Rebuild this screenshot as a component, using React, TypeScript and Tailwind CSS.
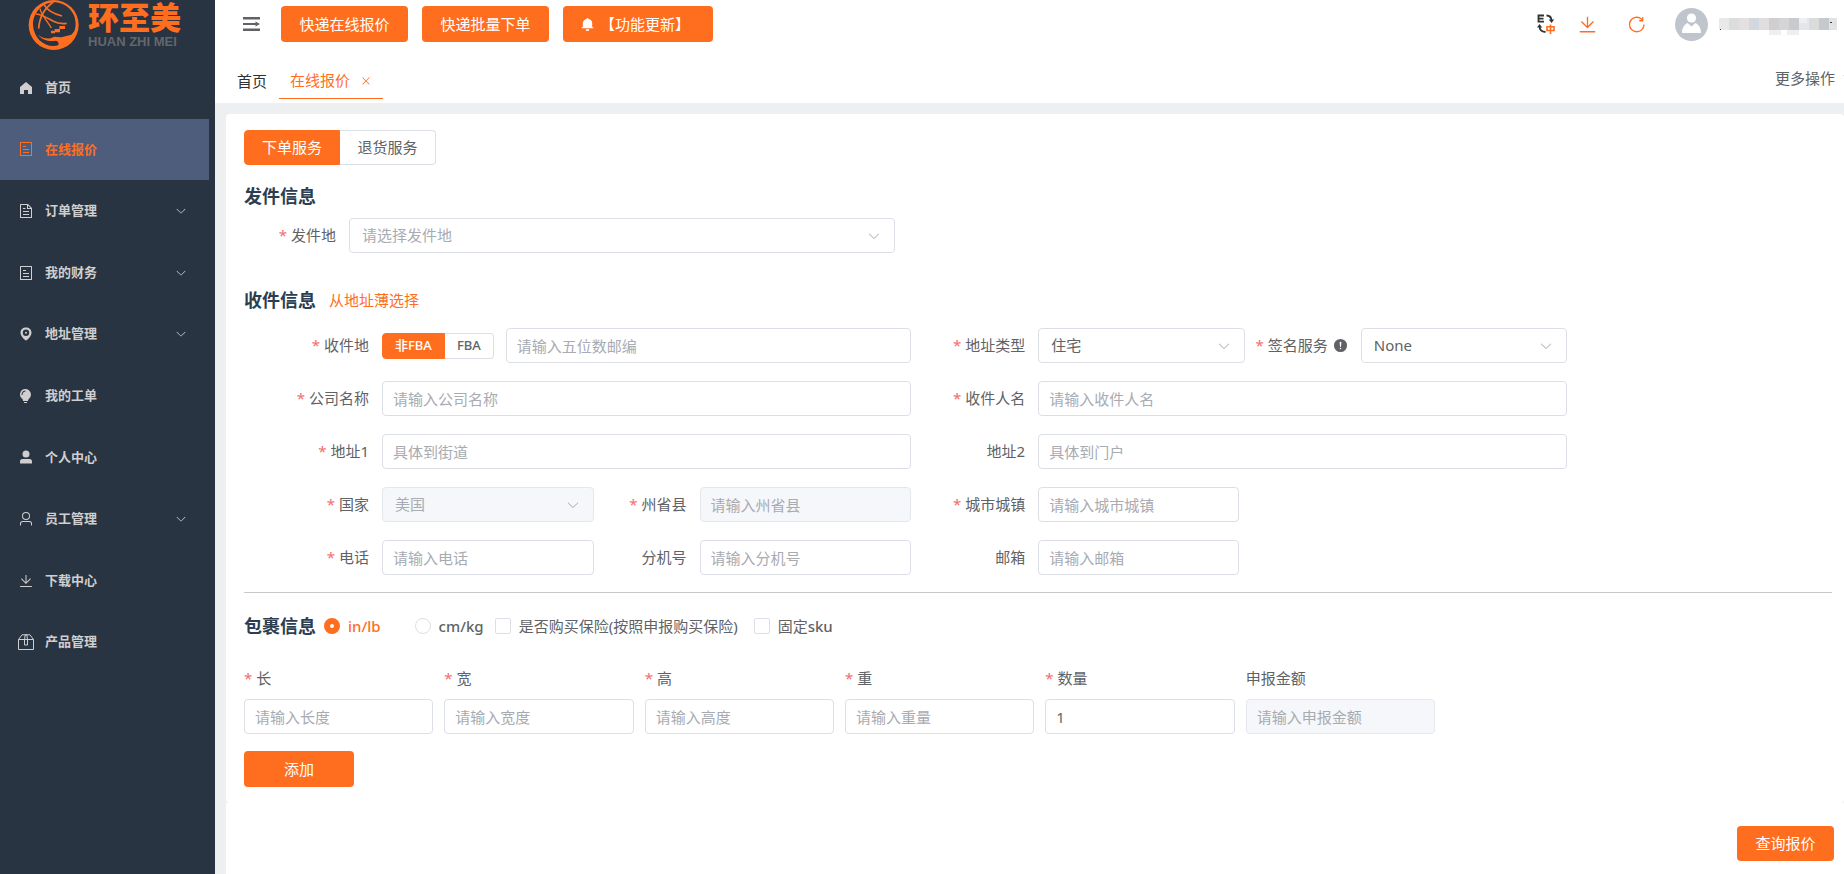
import React, { useState } from 'react';

const ICONS = {
  home: 'M512 128 128 447.936V896h255.936V640H640v256h255.936V447.936z',
  tickets:
    'M192 128v768h640V128zm-32-64h704a32 32 0 0 1 32 32v832a32 32 0 0 1-32 32H160a32 32 0 0 1-32-32V96a32 32 0 0 1 32-32m160 448h384v64H320zm0-192h192v64H320zm0 384h384v64H320z',
  document:
    'M832 384H576V128H192v768h640zm-26.496-64L640 154.496V320zM160 64h480l256 256v608a32 32 0 0 1-32 32H160a32 32 0 0 1-32-32V96a32 32 0 0 1 32-32m160 448h384v64H320zm0-192h160v64H320zm0 384h384v64H320z',
  location:
    'M512 928c23.936 0 117.504-68.352 192.064-153.152C803.456 661.888 864 535.808 864 416c0-189.632-155.84-320-352-320S160 226.368 160 416c0 120.32 60.544 246.4 159.936 359.232C394.432 859.84 488 928 512 928m0-435.2a64 64 0 1 0 0-128 64 64 0 0 0 0 128m0 140.8a204.8 204.8 0 1 1 0-409.6 204.8 204.8 0 0 1 0 409.6',
  bulb:
    'M384 960v-64h192.064v64zm448-544a350.656 350.656 0 0 1-128.32 271.424C665.344 719.04 640 763.776 640 813.504V832H320v-14.336c0-48-19.392-95.36-57.216-124.992a351.552 351.552 0 0 1-128.448-344.256c25.344-136.448 133.888-248.128 269.76-276.48A352.384 352.384 0 0 1 832 416m-544 32c0-132.288 75.904-224 192-224v-64c-154.432 0-256 122.752-256 288z',
  userFilled:
    'M288 320a224 224 0 1 0 448 0 224 224 0 1 0-448 0m544 608H160a32 32 0 0 1-32-32v-96a160 160 0 0 1 160-160h448a160 160 0 0 1 160 160v96a32 32 0 0 1-32 32z',
  user:
    'M512 512a192 192 0 1 0 0-384 192 192 0 0 0 0 384m0 64a256 256 0 1 1 0-512 256 256 0 0 1 0 512m320 320v-96a96 96 0 0 0-96-96H288a96 96 0 0 0-96 96v96a32 32 0 1 1-64 0v-96a160 160 0 0 1 160-160h448a160 160 0 0 1 160 160v96a32 32 0 1 1-64 0',
  download:
    'M160 832h704a32 32 0 1 1 0 64H160a32 32 0 1 1 0-64m384-253.696 236.288-236.352 45.248 45.248L508.8 704 192 387.2l45.248-45.248L480 584.704V128h64z',
  box:
    'M317.056 128 128 344.064V896h768V344.064L706.944 128zm-14.528-64h418.944a32 32 0 0 1 24.064 10.88l206.528 236.096A32 32 0 0 1 960 332.032V928a32 32 0 0 1-32 32H96a32 32 0 0 1-32-32V332.032a32 32 0 0 1 7.936-21.12L278.4 75.008A32 32 0 0 1 302.528 64z',
  arrowDown:
    'M831.872 340.864 512 652.672 192.128 340.864a30.592 30.592 0 0 0-42.752 0 29.12 29.12 0 0 0 0 41.6L489.664 714.24a32 32 0 0 0 44.672 0l340.288-331.712a29.12 29.12 0 0 0 0-41.728 30.592 30.592 0 0 0-42.752 0z',
  refresh:
    'M784.512 230.272v-50.56a32 32 0 1 1 64 0v149.056a32 32 0 0 1-32 32H667.52a32 32 0 1 1 0-64h92.992A320 320 0 1 0 524.8 833.152a320 320 0 0 0 320-320h64a384 384 0 0 1-384 384 384 384 0 0 1-384-384 384 384 0 0 1 643.712-282.88z',
  bell:
    'M640 832a128 128 0 0 1-256 0zm192-64H134.4a38.4 38.4 0 0 1 0-76.8H192V448c0-154.88 110.08-284.16 256.32-313.6a64 64 0 1 1 127.36 0A320.128 320.128 0 0 1 832 448v243.2h57.6a38.4 38.4 0 0 1 0 76.8z',
  warning:
    'M512 64a448 448 0 1 1 0 896 448 448 0 0 1 0-896m0 192a58.432 58.432 0 0 0-58.24 63.744l23.36 256.384a35.072 35.072 0 0 0 69.76 0l23.296-256.384A58.432 58.432 0 0 0 512 256m0 512a51.2 51.2 0 1 0 0-102.4 51.2 51.2 0 0 0 0 102.4',
  close:
    'M764.288 214.592 512 466.88 259.712 214.592a31.936 31.936 0 0 0-45.12 45.12L466.752 512 214.528 764.224a31.936 31.936 0 1 0 45.12 45.184L512 557.184l252.288 252.288a31.936 31.936 0 0 0 45.12-45.12L557.12 512.064l252.288-252.352a31.936 31.936 0 1 0-45.12-45.184z',
};

type IconName = keyof typeof ICONS;

const Icon = ({ name, className }: { name: IconName; className: string }) => (
  <svg viewBox="0 0 1024 1024" fill="currentColor" className={`shrink-0 ${className}`} aria-hidden="true">
    <path fillRule="evenodd" d={ICONS[name]} />
  </svg>
);

// the package icon needs strokes because its parts overlap
const BoxIcon = () => (
  <svg viewBox="0 0 16 16" fill="none" stroke="currentColor" className="w-4 h-4 shrink-0" aria-hidden="true">
    <path d="M.5 5.500 4 .8h8l3.500 4.700v10H.5zM.5 5.500h15M6.500 5.500v5.500h3V5.500L8.800.8H7.200z" />
  </svg>
);

const menu: { label: string; icon: IconName; more?: boolean }[] = [
  { label: '首页', icon: 'home' },
  { label: '在线报价', icon: 'tickets' },
  { label: '订单管理', icon: 'document', more: true },
  { label: '我的财务', icon: 'tickets', more: true },
  { label: '地址管理', icon: 'location', more: true },
  { label: '我的工单', icon: 'bulb' },
  { label: '个人中心', icon: 'userFilled' },
  { label: '员工管理', icon: 'user', more: true },
  { label: '下载中心', icon: 'download' },
  { label: '产品管理', icon: 'box' },
];

const Logo = () => (
  <div className="flex h-[57px] pl-7 gap-2">
    <svg viewBox="0 0 156 156" className="w-[52px] h-[52px] shrink-0" aria-hidden="true">
      <path
        fill="#ff6e1e"
        fillRule="evenodd"
        d="M77 0a75 75 0 1 0 0 150A75 75 0 1 0 77 0zM83 7a65 65 0 0 1 10 128C60 148 18 122 15 76 14 38 44 6 83 7z"
      />
      <g fill="none" stroke="#ff6e1e" strokeWidth="5">
        <path d="M24 42c22 2 40 16 52 22s26 8 40 6" />
        <path d="M48 14c10 18 30 28 54 34" />
        <path d="M76 6C48 26 34 50 32 86" />
        <path d="M36 26c4 20 22 36 34 58" strokeWidth="4" />
      </g>
      <path fill="#ff6e1e" d="M94 78h17v9H94zM80 87h16v10H80zM69 92h12v8H69z" />
      <path fill="#ff6e1e" d="M30 104c18 14 36 14 48 6l22 2 30-8 14-16c-4 28-26 46-54 50 4-8 2-14-6-16-20 4-42-2-54-18z" />
    </svg>
    <div className="pt-px font-['Liberation_Sans','Noto_Sans_CJK_SC',sans-serif] whitespace-nowrap">
      <div className="text-[31px] leading-9 font-black text-[#ff6e1e]">环至美</div>
      <div className="text-[13px] leading-[10px] font-bold text-[#63676c]">HUAN ZHI MEI</div>
    </div>
  </div>
);

const Sidebar = () => (
  <aside className="w-[215px] shrink-0 bg-[#283442] pr-[6px]">
    <Logo />
    <nav className="grid auto-rows-fr h-[616px]">
      {menu.map((item) => {
        const active = item.label === '在线报价';
        return (
          <a
            key={item.label}
            href="#"
            className={`flex items-center pl-[18px] pr-[22px] text-[13px] font-bold ${
              active ? 'bg-[#4e5d7c] text-[#ff6e1e]' : 'text-[#d0cece]'
            }`}
          >
            {item.icon === 'box' ? <BoxIcon /> : <Icon name={item.icon} className="w-4 h-4" />}
            <span className="flex-1 pl-[11px]">{item.label}</span>
            {item.more && <Icon name="arrowDown" className="w-3 h-3" />}
          </a>
        );
      })}
    </nav>
  </aside>
);

// masked account name
const tiles = ['#e9e9ea', '#dddcdd', '#e4e0df', '#d3d7de', '#e0dedf', '#cfcfd1', '#d5d4d6', '#c9cacd', '#e3e6ea', '#dcdbdc', '#c5c8cc', '#e2e3e5'];

const MaskedName = () => (
  <svg viewBox="0 0 118 24" className="w-[118px] h-6 shrink-0" role="img" aria-label="account">
    {tiles.map((c, i) => (
      <rect key={i} x={i * 10} y="6" width="10" height="12" fill={c} />
    ))}
    <path fill="#f0eef0" d="M50 18h12v5H50zM68 18h12v5H68zM80 6h8v5h-8z" />
    <path fill="#3a3a3a" d="M1 17h1v1H1zM111 10h2v1h-2z" />
  </svg>
);

const Header = () => (
  <header className="flex items-center justify-between h-12 pl-7 pr-[7px]">
    <div className="flex items-center">
      <button aria-label="menu" className="mr-5 text-[#606266]">
        <svg viewBox="0 0 18 16" className="block w-[18px] h-4" fill="currentColor" aria-hidden="true">
          <path d="M0 1h17v2.600H0zM0 6.900h13v2.200H0zM0 12.400h17V15H0zM12.500 5.500 17 8l-4.500 2.500z" />
        </svg>
      </button>
      <div className="flex gap-[14px] text-[15px] text-white">
        <button className="w-[127px] h-9 rounded bg-[#ff6e1e]">快递在线报价</button>
        <button className="w-[127px] h-9 rounded bg-[#ff6e1e]">快递批量下单</button>
        <button className="flex items-center w-[150px] h-9 pl-[17px] rounded bg-[#ff6e1e] whitespace-nowrap">
          <Icon name="bell" className="w-[15px] h-[15px] mr-[5px]" />
          【功能更新】
        </button>
      </div>
    </div>
    <div className="flex items-center text-[#ff6e1e]">
      <button aria-label="language" className="mr-[22px]">
        <svg viewBox="0 0 18 20" className="block w-[18px] h-5" fill="none" aria-hidden="true">
          <path stroke="#333" strokeWidth="1.800" d="M7 1.500H1.500v6.200H7M1.500 4.600h5" />
          <path stroke="#333" strokeWidth="1.800" d="M9.500 1.500c3 0 5 1.500 5 5.500M2.500 12c0 4 2 5.800 6 6" />
          <path fill="#333" d="M11.800 5.500h5.400L14.500 9zM0 13.500 2.500 10 5.200 13.500z" />
          <path stroke="#ff6e1e" strokeWidth="1.600" d="M10 12.800h7v3.700h-7zM13.500 10.500V20" />
        </svg>
      </button>
      <button aria-label="download" className="mr-7">
        <Icon name="download" className="w-[21px] h-[21px]" />
      </button>
      <button aria-label="refresh" className="mr-7">
        <Icon name="refresh" className="w-[21px] h-[21px]" />
      </button>
      <svg viewBox="0 0 33 33" className="w-[33px] h-[33px] mr-[11px]" aria-hidden="true">
        <circle cx="16.500" cy="16.500" r="16.500" fill="#c0c4cc" />
        <circle cx="16.500" cy="10" r="4.600" fill="#fff" />
        <path fill="#fff" d="M7 25c0-5 2-8 5.500-10l4 3.500 4-3.500C24 17 26 20 26 25z" />
      </svg>
      <MaskedName />
    </div>
  </header>
);

const TabBar = () => (
  <div className="flex justify-between h-[55px] pt-[15px] pb-1 pl-[22px] overflow-hidden text-[15px]">
    <div className="flex">
      <a href="#" className="flex items-center pr-3 text-[#303133]">
        首页
      </a>
      <div className="flex items-center gap-[10px] px-[11px] border-b border-[#ff6e1e] text-[#ff6e1e]">
        <a href="#">在线报价</a>
        <button aria-label="close">
          <Icon name="close" className="w-3 h-3" />
        </button>
      </div>
    </div>
    <button className="flex items-center gap-2 h-[30px] -mr-2 text-[#606266]">
      更多操作
      <svg viewBox="0 0 9 6" className="w-[9px] h-[6px]" fill="#c0c4cc" aria-hidden="true">
        <path d="M0 0h9L4.500 6z" />
      </svg>
    </button>
  </div>
);

interface LabelProps {
  id: string;
  text: string;
  required?: boolean;
  className?: string;
  children?: React.ReactNode;
}

const Label = ({ id, text, required, className = '', children }: LabelProps) => (
  <label htmlFor={id} className={`flex items-center shrink-0 whitespace-nowrap text-[#606266] ${className}`}>
    {required && <span className="mr-1 text-[#f56c6c]">*</span>}
    {text}
    {children}
  </label>
);

const TextField = (props: React.InputHTMLAttributes<HTMLInputElement>) => (
  <div className="flex-1 min-w-0">
    <input
      type="text"
      className="block w-full h-[35px] px-[10px] rounded border border-[#dcdfe6] bg-white text-[#606266] placeholder:text-[#a8abb2] outline-none focus:border-[#ff6e1e] disabled:border-[#e4e7ed] disabled:bg-[#f5f7fa]"
      {...props}
    />
  </div>
);

interface SelectFieldProps {
  id: string;
  option: string;
  muted?: boolean;
  disabled?: boolean;
}

const SelectField = ({ id, option, muted, disabled }: SelectFieldProps) => (
  <div className="relative flex-1 min-w-0">
    <select
      id={id}
      disabled={disabled}
      className={`block w-full h-[35px] pl-3 pr-8 rounded border appearance-none outline-none opacity-100 ${
        disabled ? 'border-[#e4e7ed] bg-[#f5f7fa]' : 'border-[#dcdfe6] bg-white'
      } ${muted ? 'text-[#a8abb2]' : 'text-[#606266]'}`}
    >
      <option>{option}</option>
    </select>
    <span className="absolute inset-y-0 right-[14px] flex items-center pointer-events-none text-[#a8abb2]">
      <Icon name="arrowDown" className="w-[14px] h-[14px]" />
    </span>
  </div>
);

interface SegmentedProps {
  name: string;
  options: string[];
  itemClass: string;
}

const Segmented = ({ name, options, itemClass }: SegmentedProps) => {
  const [value, setValue] = useState(options[0]);
  return (
    <div className="flex shrink-0">
      {options.map((o) => (
        <label
          key={o}
          className={`relative flex items-center justify-center border first:rounded-l last:rounded-r cursor-pointer ${itemClass} ${
            value === o ? 'border-[#ff6e1e] bg-[#ff6e1e] text-white' : 'border-[#dcdfe6] border-l-0 text-[#606266]'
          }`}
        >
          <input type="radio" name={name} className="sr-only" checked={value === o} onChange={() => setValue(o)} />
          {o}
        </label>
      ))}
    </div>
  );
};

const headingClass = 'text-[18px] leading-7 font-bold text-[#2c3e50]';
const radioClass =
  'w-4 h-4 mr-2 appearance-none rounded-full border border-[#dcdfe6] checked:border-[6px] checked:border-[#ff6e1e]';
const checkClass =
  'w-4 h-4 mr-2 appearance-none rounded-xs border border-[#dcdfe6] checked:border-[#ff6e1e] checked:bg-[#ff6e1e]';

const leftLabel = 'w-[138px] justify-end pr-[13px]';
const midLabel = 'w-[106px] justify-end pr-[13px]';
const rightLabel = 'w-[127px] justify-end pr-[13px]';

const Receiver = () => (
  <div className="w-5/6 mt-[14px] grid grid-cols-[668fr_657fr] gap-y-[18px]">
    <div className="flex items-center min-w-0">
      <Label id="zip" text="收件地" required className={leftLabel} />
      <Segmented name="fba" options={['非FBA', 'FBA']} itemClass="h-[26px] px-3 text-[13px] font-medium" />
      <div className="flex-1 min-w-0 pl-3">
        <TextField id="zip" placeholder="请输入五位数邮编" />
      </div>
    </div>
    <div className="flex items-center min-w-0">
      <Label id="addrType" text="地址类型" required className={rightLabel} />
      <SelectField id="addrType" option="住宅" />
      <Label id="sign" text="签名服务" required className="w-[116px] justify-end pr-[13px]">
        <Icon name="warning" className="w-[15px] h-[15px] ml-[5px]" />
      </Label>
      <SelectField id="sign" option="None" />
    </div>

    <div className="flex items-center min-w-0">
      <Label id="company" text="公司名称" required className={leftLabel} />
      <TextField id="company" placeholder="请输入公司名称" />
    </div>
    <div className="flex items-center min-w-0">
      <Label id="contact" text="收件人名" required className={rightLabel} />
      <TextField id="contact" placeholder="请输入收件人名" />
    </div>

    <div className="flex items-center min-w-0">
      <Label id="addr1" text="地址1" required className={leftLabel} />
      <TextField id="addr1" placeholder="具体到街道" />
    </div>
    <div className="flex items-center min-w-0">
      <Label id="addr2" text="地址2" className={rightLabel} />
      <TextField id="addr2" placeholder="具体到门户" />
    </div>

    <div className="flex items-center min-w-0">
      <Label id="country" text="国家" required className={leftLabel} />
      <SelectField id="country" option="美国" muted disabled />
      <Label id="state" text="州省县" required className={midLabel} />
      <TextField id="state" placeholder="请输入州省县" disabled />
    </div>
    <div className="flex items-center min-w-0">
      <Label id="city" text="城市城镇" required className={rightLabel} />
      <div className="flex-1">
        <div className="w-[38%]">
          <TextField id="city" placeholder="请输入城市城镇" />
        </div>
      </div>
    </div>

    <div className="flex items-center min-w-0">
      <Label id="phone" text="电话" required className={leftLabel} />
      <TextField id="phone" placeholder="请输入电话" />
      <Label id="ext" text="分机号" className={midLabel} />
      <TextField id="ext" placeholder="请输入分机号" />
    </div>
    <div className="flex items-center min-w-0">
      <Label id="email" text="邮箱" className={rightLabel} />
      <div className="flex-1">
        <div className="w-[38%]">
          <TextField id="email" placeholder="请输入邮箱" />
        </div>
      </div>
    </div>
  </div>
);

const columns = [
  { id: 'length', label: '长', placeholder: '请输入长度', required: true },
  { id: 'width', label: '宽', placeholder: '请输入宽度', required: true },
  { id: 'height', label: '高', placeholder: '请输入高度', required: true },
  { id: 'weight', label: '重', placeholder: '请输入重量', required: true },
  { id: 'count', label: '数量', value: '1', required: true },
  { id: 'amount', label: '申报金额', placeholder: '请输入申报金额', disabled: true },
];

const Parcel = () => {
  const [unit, setUnit] = useState('in/lb');
  return (
    <>
      <div className="flex items-center mt-[19px] text-[#606266]">
        <h2 className={headingClass}>包裹信息</h2>
        <label className={`flex items-center ml-2 mr-[34px] font-medium ${unit === 'in/lb' ? 'text-[#ff6e1e]' : ''}`}>
          <input type="radio" name="unit" className={radioClass} checked={unit === 'in/lb'} onChange={() => setUnit('in/lb')} />
          in/lb
        </label>
        <label className={`flex items-center mr-[11px] font-medium ${unit === 'cm/kg' ? 'text-[#ff6e1e]' : ''}`}>
          <input type="radio" name="unit" className={radioClass} checked={unit === 'cm/kg'} onChange={() => setUnit('cm/kg')} />
          cm/kg
        </label>
        <label className="flex items-center mr-4">
          <input type="checkbox" className={checkClass} />
          是否购买保险(按照申报购买保险)
        </label>
        <label className="flex items-center">
          <input type="checkbox" className={checkClass} />
          固定<span className="font-medium">sku</span>
        </label>
      </div>

      <div className="w-3/4 mt-[26px] grid grid-cols-6 gap-[11px]">
        {columns.map((c) => (
          <div key={c.id} className="min-w-0">
            <Label id={c.id} text={c.label} required={c.required} className="h-6 mb-[9px]" />
            <TextField id={c.id} placeholder={c.placeholder} defaultValue={c.value} disabled={c.disabled} />
          </div>
        ))}
      </div>

      <button className="block w-[110px] h-9 mt-[17px] rounded bg-[#ff6e1e] text-white">添加</button>
    </>
  );
};

const App: React.FC = () => {
  return (
    <div className="flex min-h-screen overflow-hidden bg-[#eeeff1] font-['Noto_Sans','Noto_Sans_CJK_SC',sans-serif] text-[15px]">
      <Sidebar />
      <div className="flex flex-col flex-1 min-w-0">
        <div className="bg-white">
          <Header />
          <TabBar />
        </div>

        <main className="flex flex-col flex-1 pl-[11px] pt-[11px]">
          <section className="pt-4 pb-4 pl-[18px] pr-3 rounded bg-white">
            <Segmented name="service" options={['下单服务', '退货服务']} itemClass="w-24 h-[35px]" />

            <h2 className={`mt-[17px] ${headingClass}`}>发件信息</h2>
            <div className="flex items-center w-[41%] mt-2">
              <Label id="origin" text="发件地" required className="w-[105px] justify-end pr-[13px]" />
              <SelectField id="origin" option="请选择发件地" muted />
            </div>

            <div className="flex items-center gap-[13px] mt-[33px]">
              <h2 className={headingClass}>收件信息</h2>
              <a href="#" className="text-[#ff6e1e]">
                从地址薄选择
              </a>
            </div>
            <Receiver />

            <hr className="mt-[17px] border-[#c8c9cc]" />
            <Parcel />
          </section>

          <div className="flex flex-1 items-start justify-end pt-[23px] pb-[13px] pr-[10px] bg-white">
            <button className="w-[97px] h-[35px] rounded bg-[#ff6e1e] text-white">查询报价</button>
          </div>
        </main>
      </div>
    </div>
  );
};

export default App;
